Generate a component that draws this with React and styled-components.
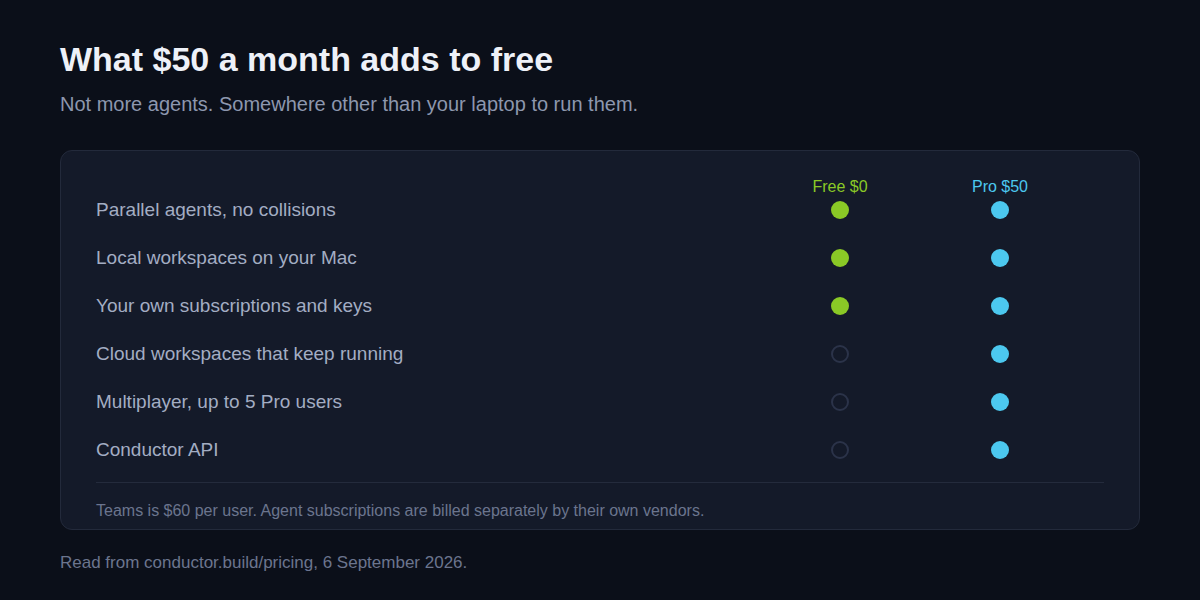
import React from 'react';
import styled, { createGlobalStyle } from 'styled-components';

const GlobalStyle = createGlobalStyle`
  body {
    margin: 0;
    background: #0b0f19;
    font-family: "Liberation Sans", Arial, sans-serif;
  }
`;

const Page = styled.div`
  width: 1200px;
  height: 600px;
  box-sizing: border-box;
  padding: 39px 60px 0;
  background: #0b0f19;
`;

const Title = styled.h1`
  margin: 0;
  font-size: 34px;
  line-height: 40px;
  font-weight: 700;
  color: #eef1f8;
`;

const Subtitle = styled.p`
  margin: 14px 0 0;
  font-size: 20px;
  line-height: 22px;
  color: #8d97ae;
`;

const Card = styled.div`
  margin-top: 35px;
  background: #141a29;
  border: 1px solid #232a3b;
  border-radius: 12px;
  padding: 27px 35px 0;
  height: 380px;
  box-sizing: border-box;
`;

const Grid = styled.div`
  display: grid;
  grid-template-columns: 1fr 160px 160px;
  padding-right: 24px;
  row-gap: 16px;
`;

const Head = styled.div`
  font-size: 16px;
  line-height: 16px;
  text-align: center;
  color: ${p => p.$color};
  margin: 1px 0 -17px;
`;

const Label = styled.div`
  font-size: 19px;
  line-height: 32px;
  color: #a3adc3;
`;

const Cell = styled.div`
  display: flex;
  align-items: center;
  justify-content: center;
  height: 32px;
`;

const Dot = styled.span`
  width: 18px;
  height: 18px;
  border-radius: 50%;
  box-sizing: border-box;
  background: ${p => (p.$on ? p.$color : 'transparent')};
  border: ${p => (p.$on ? 'none' : '2px solid #2b3349')};
`;

const Divider = styled.div`
  height: 1px;
  background: #242b3c;
  margin-top: 16px;
`;

const Note = styled.p`
  margin: 19px 0 0;
  font-size: 16px;
  line-height: 18px;
  color: #6b758e;
`;

const Source = styled.p`
  margin: 23px 0 0;
  font-size: 17px;
  line-height: 20px;
  color: #6b758e;
`;

const GREEN = '#8ac926';
const BLUE = '#4cc8ef';

const rows = [
  ['Parallel agents, no collisions', true],
  ['Local workspaces on your Mac', true],
  ['Your own subscriptions and keys', true],
  ['Cloud workspaces that keep running', false],
  ['Multiplayer, up to 5 Pro users', false],
  ['Conductor API', false],
];

export default function App() {
  return (
    <>
      <GlobalStyle />
      <Page>
        <Title>What $50 a month adds to free</Title>
        <Subtitle>Not more agents. Somewhere other than your laptop to run them.</Subtitle>
        <Card>
          <Grid>
            <div />
            <Head $color={GREEN}>Free $0</Head>
            <Head $color={BLUE}>Pro $50</Head>
            {rows.map(([label, free]) => (
              <React.Fragment key={label}>
                <Label>{label}</Label>
                <Cell><Dot $on={free} $color={GREEN} /></Cell>
                <Cell><Dot $on $color={BLUE} /></Cell>
              </React.Fragment>
            ))}
          </Grid>
          <Divider />
          <Note>Teams is $60 per user. Agent subscriptions are billed separately by their own vendors.</Note>
        </Card>
        <Source>Read from conductor.build/pricing, 6 September 2026.</Source>
      </Page>
    </>
  );
}
